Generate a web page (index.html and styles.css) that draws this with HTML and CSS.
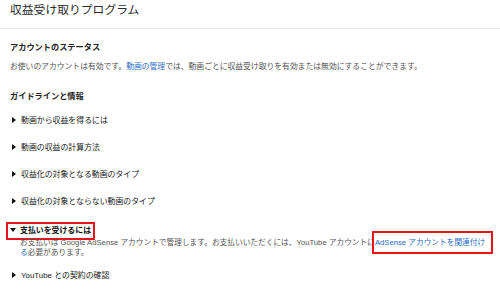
FILE: index.html
```html
<!DOCTYPE html>
<html lang="ja">
<head>
    <meta charset="UTF-8">
    <title>収益受け取りプログラム</title>
    <link rel="stylesheet" href="styles.css">
</head>
<body>

<div class="page">
    <!-- Header -->
    <div class="page-header">
        <h1>収益受け取りプログラム</h1>
    </div>

    <!-- Account status -->
    <div class="section status">
        <h2>アカウントのステータス</h2>
        <p class="status-text">お使いのアカウントは有効です。<a href="#">動画の管理</a>では、動画ごとに収益受け取りを有効または無効にすることができます。</p>
    </div>

    <!-- Guidelines -->
    <div class="section guide">
        <h2>ガイドラインと情報</h2>
        <ul class="topics">
            <li class="topic"><span class="arrow"></span>動画から収益を得るには</li>
            <li class="topic"><span class="arrow"></span>動画の収益の計算方法</li>
            <li class="topic"><span class="arrow"></span>収益化の対象となる動画のタイプ</li>
            <li class="topic"><span class="arrow"></span>収益化の対象とならない動画のタイプ</li>
            <li class="topic open">
                <span class="topic-title marked"><span class="arrow down"></span>支払いを受けるには</span>
                <p class="topic-body">お支払いは Google AdSense アカウントで管理します。お支払いいただくには、YouTube アカウントに<a href="#"><span class="marked-link">AdSense アカウントを関連付け</span><br>る</a>必要があります。</p>
            </li>
            <li class="topic after-open"><span class="arrow"></span>YouTube との契約の確認</li>
        </ul>
    </div>
</div>

</body>
</html>
```

FILE: styles.css
```css
/* Reset */
* {
    box-sizing: border-box;
    margin: 0;
    padding: 0;
}

body {
    font-family: "Liberation Sans", "Noto Sans CJK JP", sans-serif;
    background-color: #fff;
    color: #333;
}

a {
    color: #2a6ec4;
    text-decoration: none;
}

/* Header */
.page-header {
    height: 29px;
    padding: 4px 10px 0;
    border-bottom: 1px solid #e6e6e6;
}

.page-header h1 {
    font-size: 11.8px;
    line-height: 12px;
    font-weight: normal;
    color: #2b2b2b;
}

/* Sections */
.section {
    padding: 0 10px;
}

.section h2 {
    font-size: 8.2px;
    line-height: 10px;
    font-weight: bold;
    color: #222;
}

.status {
    margin-top: 14px;
}

.status-text {
    margin-top: 9px;
    font-size: 7.8px;
    line-height: 10px;
    color: #555;
}

.guide {
    margin-top: 20px;
}

/* Topic list */
.topics {
    list-style: none;
    margin-top: 14px;
}

.topic {
    font-size: 7.9px;
    line-height: 10px;
    color: #222;
    margin-top: 17px;
    white-space: nowrap;
}

.topic:first-child {
    margin-top: 0;
}

.topic.open {
    margin-top: 19px;
}

.topic.after-open {
    margin-top: 13px;
}

.arrow {
    display: inline-block;
    width: 0;
    height: 0;
    margin: 0 5px 0 2px;
    border-top: 3px solid transparent;
    border-bottom: 3px solid transparent;
    border-left: 4px solid #111;
    vertical-align: 0;
}

.arrow.down {
    border-left: 3px solid transparent;
    border-right: 3px solid transparent;
    border-top: 4px solid #111;
    border-bottom: 0;
    margin: 0 4px 1px 0;
}

.topic-title {
    display: inline-block;
    font-weight: bold;
    color: #111;
}

.topic-body {
    margin-top: 2px;
    padding-left: 10px;
    font-size: 7.7px;
    line-height: 10px;
    color: #555;
}

/* Red annotation boxes */
.marked {
    outline: 2px solid #e4161b;
    outline-offset: 2px;
}

.marked-link {
    position: relative;
}

.marked-link::after {
    content: "";
    position: absolute;
    left: -3px;
    right: -8px;
    top: -7px;
    bottom: -7px;
    border: 2px solid #e4161b;
}
```
